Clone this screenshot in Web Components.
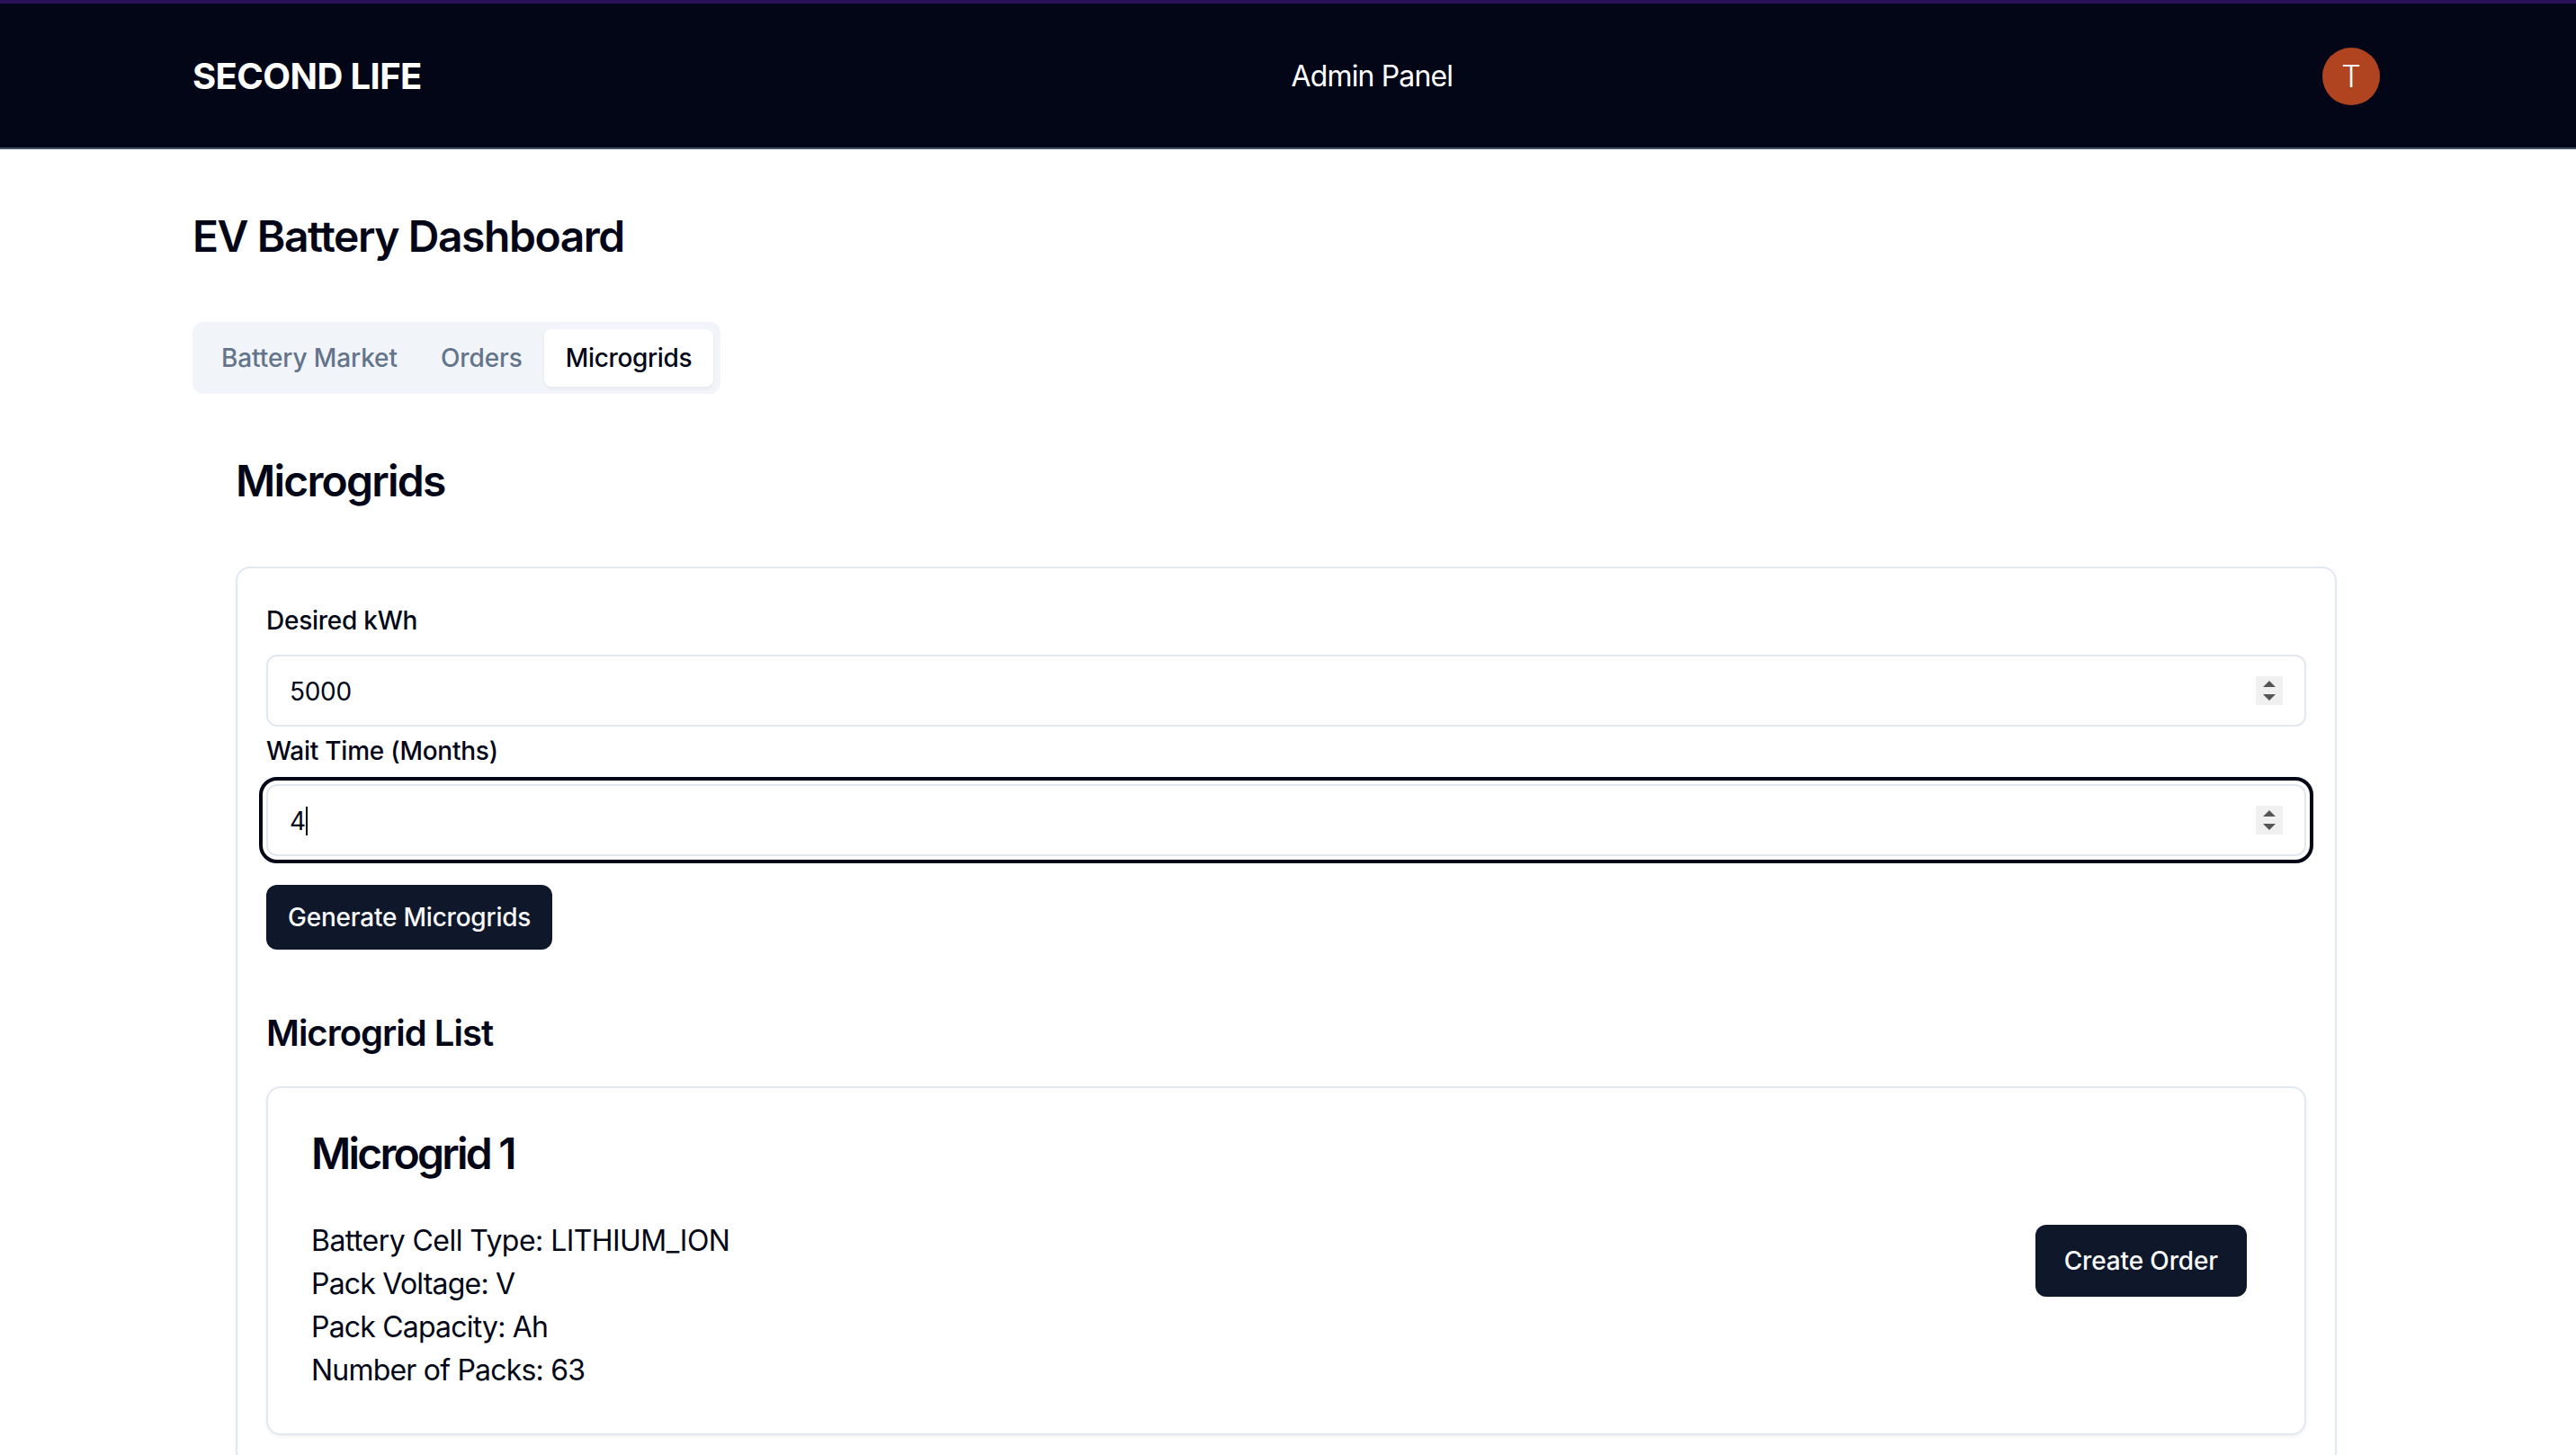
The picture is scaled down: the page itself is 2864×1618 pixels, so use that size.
<!DOCTYPE html>
<html lang="en">
<head>
<meta charset="utf-8">
<title>EV Battery Dashboard</title>
<style>
  html, body { margin: 0; height: 100%; overflow: hidden; background: #fff; }
  body { font-family: Inter, "Liberation Sans", sans-serif; color: #020617; }
  sl-grid-card div + div { letter-spacing: -0.8px; }
</style>
</head>
<body>
<sl-header logo="SECOND LIFE" title="Admin Panel" initial="T"></sl-header>
<sl-dashboard heading="EV Battery Dashboard">
  <sl-tabs>
    <sl-tab>Battery Market</sl-tab>
    <sl-tab>Orders</sl-tab>
    <sl-tab active>Microgrids</sl-tab>
  </sl-tabs>
  <sl-microgrids heading="Microgrids">
    <sl-field label="Desired kWh" value="5000"></sl-field>
    <sl-field label="Wait Time (Months)" value="4" focused></sl-field>
    <sl-button class="generate">Generate Microgrids</sl-button>
    <sl-list-title>Microgrid List</sl-list-title>
    <sl-grid-card heading="Microgrid 1">
      <div>Battery Cell Type: LITHIUM_ION</div>
      <div>Pack Voltage: V</div>
      <div>Pack Capacity: Ah</div>
      <div>Number of Packs: 63</div>
      <sl-button slot="action" tall>Create Order</sl-button>
    </sl-grid-card>
  </sl-microgrids>
</sl-dashboard>

<script>
//Top bar
class SlHeader extends HTMLElement {
  constructor() {
    super();
    this.attachShadow({ mode: "open" });
    this.shadowRoot.innerHTML = `
      <style>
        :host {
          display: flex;
          justify-content: space-between;
          align-items: center;
          box-sizing: border-box;
          height: 166px;
          padding: 4px 218px 2px 214px;
          background: #020617;
          border-top: 4px solid #2a1158;
          border-bottom: 2px solid #475569;
          color: #fff;
        }
        .logo { font-size: 40px; line-height: 56px; font-weight: 700; letter-spacing: -0.6px; }
        .title { font-size: 32px; line-height: 48px; font-weight: 400; letter-spacing: -0.85px; }
        .avatar {
          display: flex;
          align-items: center;
          justify-content: center;
          width: 64px;
          height: 64px;
          margin-top: -1px;
          border-radius: 50%;
          background: #b04420;
          font-size: 34px;
          font-weight: 300;
        }
      </style>
      <div class="logo">${this.getAttribute("logo")}</div>
      <div class="title">${this.getAttribute("title")}</div>
      <div class="avatar">${this.getAttribute("initial")}</div>
    `;
  }
}
customElements.define("sl-header", SlHeader);

//Page body with the main heading
class SlDashboard extends HTMLElement {
  constructor() {
    super();
    this.attachShadow({ mode: "open" });
    this.shadowRoot.innerHTML = `
      <style>
        :host { display: block; padding: 65px 218px 0 214px; }
        h1 {
          margin: 0 0 63px;
          font-size: 48px;
          line-height: 64px;
          font-weight: 600;
          letter-spacing: -1.45px;
        }
      </style>
      <h1>${this.getAttribute("heading")}</h1>
      <slot></slot>
    `;
  }
}
customElements.define("sl-dashboard", SlDashboard);

class SlTabs extends HTMLElement {
  constructor() {
    super();
    this.attachShadow({ mode: "open" });
    this.shadowRoot.innerHTML = `
      <style>
        :host {
          display: inline-flex;
          box-sizing: border-box;
          height: 80px;
          padding: 8px;
          border-radius: 12px;
          background: #f1f5f9;
          vertical-align: top;
        }
      </style>
      <slot></slot>
    `;
  }
}
customElements.define("sl-tabs", SlTabs);

class SlTab extends HTMLElement {
  constructor() {
    super();
    this.attachShadow({ mode: "open" });
    this.shadowRoot.innerHTML = `
      <style>
        :host {
          display: flex;
          align-items: center;
          padding: 0 24px;
          border-radius: 8px;
          font-size: 28px;
          font-weight: 500;
          letter-spacing: -0.1px;
          color: #64748b;
        }
        :host([active]) {
          background: #fff;
          color: #020617;
          letter-spacing: -0.35px;
          box-shadow: 0 2px 4px rgba(0, 0, 0, 0.06);
        }
      </style>
      <slot></slot>
    `;
  }
}
customElements.define("sl-tab", SlTab);

//Microgrids panel: heading plus bordered card
class SlMicrogrids extends HTMLElement {
  constructor() {
    super();
    this.attachShadow({ mode: "open" });
    this.shadowRoot.innerHTML = `
      <style>
        :host { display: block; padding: 0 48px; }
        h2 {
          margin: 65px 0 63px;
          font-size: 48px;
          line-height: 64px;
          font-weight: 600;
          letter-spacing: -1.8px;
        }
        .card {
          box-sizing: border-box;
          padding: 32px;
          border: 2px solid #e2e8f0;
          border-radius: 16px;
          background: #fff;
          box-shadow: 0 2px 4px rgba(0, 0, 0, 0.04);
        }
      </style>
      <h2>${this.getAttribute("heading")}</h2>
      <div class="card"><slot></slot></div>
    `;
  }
}
customElements.define("sl-microgrids", SlMicrogrids);

//Label and number box, spinner is drawn since the native one only shows on hover
class SlField extends HTMLElement {
  constructor() {
    super();
    this.attachShadow({ mode: "open" });
    let caret = this.hasAttribute("focused") ? `<span class="caret"></span>` : "";
    this.shadowRoot.innerHTML = `
      <style>
        :host { display: block; padding-top: 6px; }
        :host([focused]) { padding-top: 7px; }
        label {
          display: block;
          margin-bottom: 18px;
          font-size: 28px;
          line-height: 40px;
          font-weight: 500;
          letter-spacing: -0.25px;
        }
        :host([focused]) label { margin-bottom: 17px; }
        .box {
          display: flex;
          align-items: center;
          justify-content: space-between;
          box-sizing: border-box;
          height: 80px;
          padding: 0 24px;
          border: 2px solid #e2e8f0;
          border-radius: 12px;
          background: #fff;
          font-size: 28px;
        }
        :host([focused]) .box { outline: 4px solid #020617; outline-offset: 4px; }
        .value { display: flex; align-items: center; padding-top: 1px; letter-spacing: -0.3px; }
        .caret { display: block; width: 2px; height: 32px; background: #020617; }
        svg { display: block; }
      </style>
      <label>${this.getAttribute("label")}</label>
      <div class="box">
        <span class="value">${this.getAttribute("value")}${caret}</span>
        <svg width="30" height="32" viewBox="0 0 30 32">
          <rect width="30" height="32" fill="#f0f0f0"/>
          <path d="M8 12 15 5 22 12Z M8 20 22 20 15 27Z" fill="#555"/>
        </svg>
      </div>
    `;
  }
}
customElements.define("sl-field", SlField);

class SlButton extends HTMLElement {
  constructor() {
    super();
    this.attachShadow({ mode: "open" });
    this.shadowRoot.innerHTML = `
      <style>
        :host {
          display: inline-flex;
          align-items: center;
          box-sizing: border-box;
          height: 72px;
          padding: 0 24px;
          border-radius: 12px;
          background: #0f172a;
          color: #f8fafc;
          font-size: 28px;
          font-weight: 500;
          letter-spacing: -0.22px;
        }
        :host([tall]) { height: 80px; padding: 0 32px; letter-spacing: -0.14px; }
        :host(.generate) { margin-top: 32px; }
      </style>
      <slot></slot>
    `;
  }
}
customElements.define("sl-button", SlButton);

class SlListTitle extends HTMLElement {
  constructor() {
    super();
    this.attachShadow({ mode: "open" });
    this.shadowRoot.innerHTML = `
      <style>
        :host {
          display: block;
          margin: 65px 0 31px;
          font-size: 40px;
          line-height: 56px;
          font-weight: 600;
          letter-spacing: -1px;
        }
      </style>
      <slot></slot>
    `;
  }
}
customElements.define("sl-list-title", SlListTitle);

//One generated microgrid
class SlGridCard extends HTMLElement {
  constructor() {
    super();
    this.attachShadow({ mode: "open" });
    this.shadowRoot.innerHTML = `
      <style>
        :host {
          display: flex;
          justify-content: space-between;
          align-items: center;
          box-sizing: border-box;
          height: 388px;
          padding: 0 64px 0 48px;
          border: 2px solid #e2e8f0;
          border-radius: 16px;
          background: #fff;
          box-shadow: 0 2px 4px rgba(0, 0, 0, 0.05);
        }
        .main { padding-top: 3px; }
        h3 {
          margin: 0 0 49px;
          font-size: 48px;
          line-height: 48px;
          font-weight: 600;
          letter-spacing: -2.8px;
        }
        .info { font-size: 32px; line-height: 48px; letter-spacing: -0.55px; }
      </style>
      <div class="main">
        <h3>${this.getAttribute("heading")}</h3>
        <div class="info"><slot></slot></div>
      </div>
      <slot name="action"></slot>
    `;
  }
}
customElements.define("sl-grid-card", SlGridCard);
</script>
</body>
</html>
